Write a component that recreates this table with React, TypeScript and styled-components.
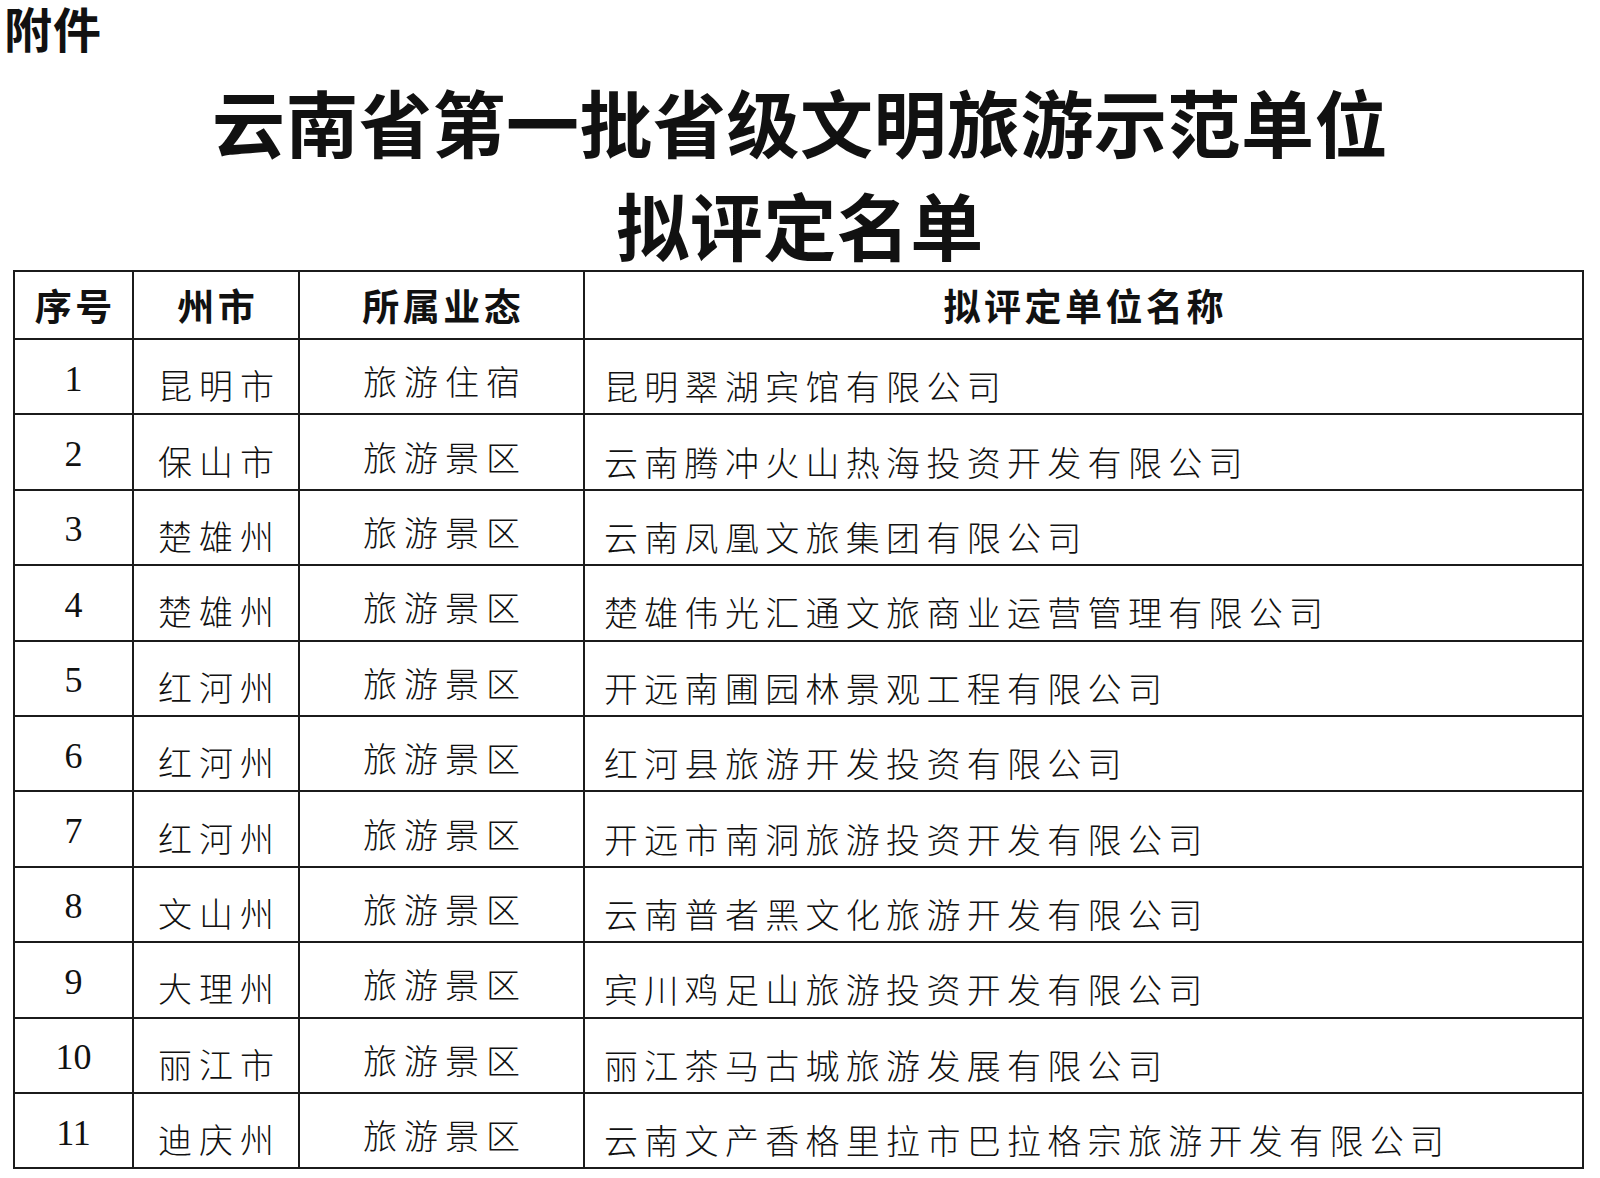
import React from 'react';
import styled, { createGlobalStyle } from 'styled-components';

const GlobalStyle = createGlobalStyle`
  html, body { margin: 0; padding: 0; background: #ffffff; }
  body { font-family: "Noto Sans CJK SC", "Noto Sans", sans-serif; color: #111111; }
`;

const Page = styled.div`
  width: 1600px;
  display: flex;
  flex-direction: column;
`;

const Attachment = styled.div`
  padding-left: 4px;
  font-size: 48px;
  line-height: 54px;
  font-weight: 700;
  letter-spacing: 1px;
`;

const TitleBlock = styled.div`
  margin-top: 20px;
  display: flex;
  flex-direction: column;
  align-items: center;
  gap: 11px;
`;

const TitleLine = styled.div`
  font-size: 73px;
  line-height: 92px;
  font-weight: 700;
  letter-spacing: 0.5px;
`;

const Table = styled.div`
  margin: 1px 0 0 13px;
  width: 1571px;
  display: grid;
  grid-template-columns: 119px 166px 285px 999px;
  grid-template-rows: 68px;
  grid-auto-rows: 75.4px;
  border-left: 2px solid #1b1b1b;
  border-top: 2px solid #1b1b1b;
  box-sizing: border-box;
`;

const Cell = styled.div<{ $align?: 'center' | 'left'; $shift?: number }>`
  box-sizing: border-box;
  border-right: 2px solid #1b1b1b;
  border-bottom: 2px solid #1b1b1b;
  display: flex;
  align-items: center;
  justify-content: ${(p) => (p.$align === 'left' ? 'flex-start' : 'center')};
  padding-top: ${(p) => (p.$shift ?? 0) * 2}px;
  white-space: nowrap;
  overflow: hidden;
`;

const HeadText = styled.span`
  font-size: 37px;
  font-weight: 700;
  letter-spacing: 3.5px;
  padding-left: 3.5px;
`;

const NumText = styled.span`
  font-family: "Liberation Serif", "Times New Roman", serif;
  font-size: 36px;
`;

const BodyText = styled.span<{ $left?: boolean }>`
  font-size: 34px;
  font-weight: 300;
  letter-spacing: ${(p) => (p.$left ? '6.3px' : '7px')};
  padding-left: ${(p) => (p.$left ? '19px' : '7px')};
`;

const rows: [string, string, string][] = [
  ['昆明市', '旅游住宿', '昆明翠湖宾馆有限公司'],
  ['保山市', '旅游景区', '云南腾冲火山热海投资开发有限公司'],
  ['楚雄州', '旅游景区', '云南凤凰文旅集团有限公司'],
  ['楚雄州', '旅游景区', '楚雄伟光汇通文旅商业运营管理有限公司'],
  ['红河州', '旅游景区', '开远南圃园林景观工程有限公司'],
  ['红河州', '旅游景区', '红河县旅游开发投资有限公司'],
  ['红河州', '旅游景区', '开远市南洞旅游投资开发有限公司'],
  ['文山州', '旅游景区', '云南普者黑文化旅游开发有限公司'],
  ['大理州', '旅游景区', '宾川鸡足山旅游投资开发有限公司'],
  ['丽江市', '旅游景区', '丽江茶马古城旅游发展有限公司'],
  ['迪庆州', '旅游景区', '云南文产香格里拉市巴拉格宗旅游开发有限公司'],
];

const headers = ['序号', '州市', '所属业态', '拟评定单位名称'];

export default function App() {
  return (
    <Page>
      <GlobalStyle />
      <Attachment>附件</Attachment>
      <TitleBlock>
        <TitleLine>云南省第一批省级文明旅游示范单位</TitleLine>
        <TitleLine>拟评定名单</TitleLine>
      </TitleBlock>
      <Table>
        {headers.map((h) => (
          <Cell key={h}>
            <HeadText>{h}</HeadText>
          </Cell>
        ))}
        {rows.map(([city, type, name], i) => (
          <React.Fragment key={i}>
            <Cell $shift={2}>
              <NumText>{i + 1}</NumText>
            </Cell>
            <Cell $shift={8}>
              <BodyText>{city}</BodyText>
            </Cell>
            <Cell $shift={4}>
              <BodyText>{type}</BodyText>
            </Cell>
            <Cell $align="left" $shift={9}>
              <BodyText $left>{name}</BodyText>
            </Cell>
          </React.Fragment>
        ))}
      </Table>
    </Page>
  );
}
